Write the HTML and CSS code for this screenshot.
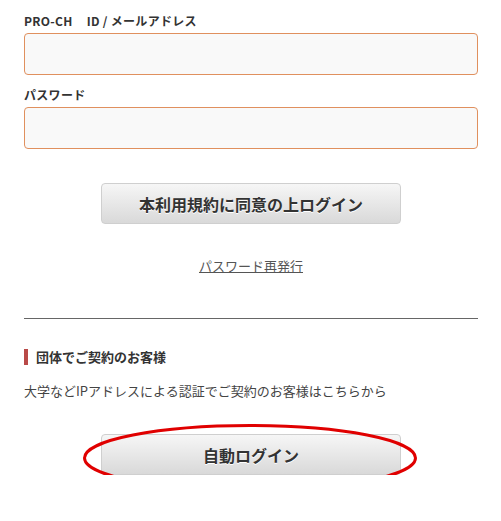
FILE: index.html
```html
<!doctype html>
<html>
<head>
<meta charset="utf-8">
<title>ログイン</title>
<link rel="stylesheet" href="styles.css">
</head>
<body>
<div class="wrap">
	<form class="login">
		<label class="lbl" for="uid">PRO-CH<span class="sp"></span>ID / メールアドレス</label>
		<input class="txt" type="text" id="uid">
		<label class="lbl" for="pw">パスワード</label>
		<input class="txt" type="password" id="pw">
		<div class="btn-row">
			<button type="button" class="btn">本利用規約に同意の上ログイン</button>
		</div>
		<p class="forgot"><a href="#">パスワード再発行</a></p>
	</form>
	<hr class="line">
	<div class="group">
		<h3 class="group-ttl">団体でご契約のお客様</h3>
		<p class="group-txt">大学などIPアドレスによる認証でご契約のお客様はこちらから</p>
		<div class="btn-row auto">
			<button type="button" class="btn">自動ログイン</button>
			<svg class="mark" width="336" height="70" viewBox="0 0 336 70"><ellipse cx="168" cy="35" rx="165.5" ry="32.5" fill="none" stroke="#e00000" stroke-width="3"/></svg>
		</div>
	</div>
</div>
</body>
</html>
```

FILE: styles.css
```css
*{padding:0; margin:0; box-sizing:border-box;}
body{background:#fff; color:#333; font-family:"Noto Sans CJK JP","Noto Sans",sans-serif;}
.wrap{padding:12px 23px 0 24px;}
.lbl{display:block; font-size:12px; font-weight:bold; line-height:18px; margin-bottom:3px; letter-spacing:0.3px;}
.sp{display:inline-block; width:14px;}
.txt{display:block; width:100%; height:42px; border:1px solid #e0905e; border-radius:4px; background:#f9f9f9; outline:none; margin-bottom:11px;}
.btn-row{text-align:center; margin-top:34px;}
.btn{width:300px; height:41px; border:1px solid #cfcfcf; border-radius:4px; background:linear-gradient(#f6f6f6,#d9d9d9); font-family:inherit; font-size:16px; font-weight:bold; color:#333; text-shadow:0 1px 0 #fff; cursor:pointer;}
.forgot{text-align:center; font-size:13px; line-height:20px; margin-top:32px;}
.forgot a{color:#555; text-decoration:underline;}
.line{border:none; border-top:1px solid #666; margin-top:42px;}
.group-ttl{font-size:13px; font-weight:bold; line-height:16px; border-left:4px solid #b94a48; padding-left:8px; margin-top:30px;}
.group-txt{font-size:13px; color:#444; line-height:20px; margin-top:16px;}
.auto{position:relative; margin-top:33px;}
.mark{position:absolute; left:50%; top:-11px; margin-left:-169px; pointer-events:none;}
```
